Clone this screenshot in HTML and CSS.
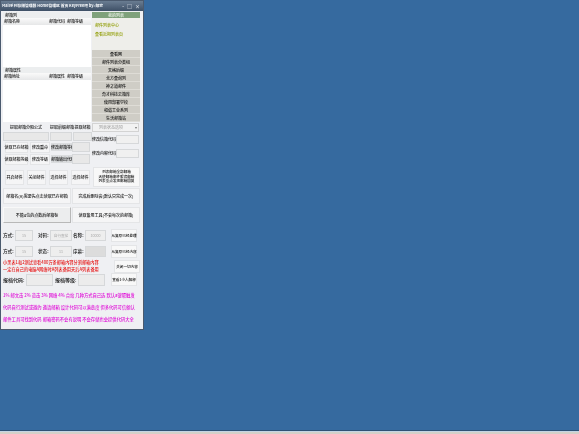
FILE: index.html
```html
<!DOCTYPE html>
<html lang="zh">
<head>
<meta charset="utf-8">
<title>Mail系列存储管理器</title>
<link rel="stylesheet" href="styles.css">
</head>
<body>
<main class="desktop">
  <section class="window">
    <header class="titlebar">
      <span class="title">Mail系列存储管理器 Home管理区 首页 KeyFree吧 by: 邮家</span>
      <span class="controls"><i class="ctl">-</i><i class="ctl">□</i><i class="ctl">×</i></span>
    </header>
    <div class="content">
      <div class="top">
        <div class="lists">
          <div class="cap">邮箱列</div>
          <div class="listhead"><span>邮箱名称</span><span>邮箱代码</span><span>邮箱等级</span></div>
          <div class="listbody first"></div>
          <div class="cap">邮箱属性</div>
          <div class="listhead"><span>邮箱地址</span><span>邮箱属性</span><span>邮箱等级</span></div>
          <div class="listbody second"></div>
        </div>
        <aside class="side">
          <div class="sidehead">我的列表</div>
          <div class="sideinfo"><p>邮件列表中心</p><p>查看近期列表页</p></div>
          <div class="sidebtn">查看网</div>
          <div class="sidebtn">邮件列表分类组</div>
          <div class="sidebtn">天格后缀</div>
          <div class="sidebtn">北方查询列</div>
          <div class="sidebtn">神之道邮件</div>
          <div class="sidebtn">奇才科技云箱库</div>
          <div class="sidebtn">使用部署学校</div>
          <div class="sidebtn">和谐工业系列</div>
          <div class="sidebtn">生活邮箱站</div>
        </aside>
      </div>

      <div class="formrow r1">
        <div class="formleft">
          <div class="tri"><span>提取邮箱分隔公式</span><span>提取前缀邮箱</span><span>提取邮箱</span></div>
          <div class="tri boxes"><b class="box"></b><b class="box"></b><b class="box"></b></div>
          <div class="edit"><span class="flat wa">读取已存邮箱</span><span class="flat wb">修改重命</span><span class="lab graylab">修改邮箱等级</span><b class="box small"></b></div>
          <div class="edit"><span class="flat wa">读取邮箱等级</span><span class="flat wb">修改等级</span><span class="lab graylab">邮箱输出代码</span><b class="box small"></b></div>
        </div>
        <div class="formright">
          <div class="combo">列表状态选项<i class="arrow">▾</i></div>
          <div class="pair"><span class="lab">修改信箱代码</span><b class="box pairbox"></b></div>
          <div class="pair"><span class="lab">修改内容代码</span><b class="box pairbox"></b></div>
        </div>
      </div>

      <div class="mailrow">
        <span class="flat">开启邮件</span><span class="flat">关闭邮件</span><span class="flat">选择邮件</span><span class="flat">选择邮件</span>
        <span class="flat multi">列表邮箱全部邮箱<br>天使邮箱邮件服务邮箱<br>列表重点发现邮箱回复</span>
      </div>

      <div class="bigrow">
        <span class="flat">邮箱名(A)需要先点击读取已存邮箱</span><span class="flat">完成后删除会(默认只完成一次)</span>
      </div>
      <div class="bigrow">
        <span class="flat raised">不能4位的点数后邮箱标</span><span class="flat">读取备用工具(不会每次的邮箱)</span>
      </div>

      <div class="fields f1">
        <span class="fl">方式:</span><b class="box c1">15</b><span class="fl c2l">对码:</span><b class="box c2">自行查找</b><span class="fl">名称:</span><b class="box c3">10000</b><span class="flat act">从复原已经处理</span>
      </div>
      <div class="fields f2">
        <span class="fl">方式:</span><b class="box c1">15</b><span class="fl c2l">状态:</span><b class="box c2">11</b><span class="fl">序幕:</span><b class="box c3 shade"></b><span class="flat act">从复原已经内容</span>
      </div>

      <div class="warnrow">
        <p class="warn">小黑表1和2测试查看400万条邮箱内容分割邮箱内容<br>一定在自己的电脑A网络时A列表备用天后A列表备用</p>
        <span class="flat act">关闭一切内容</span>
      </div>

      <div class="coderow">
        <span class="big">报档代码:</span><b class="box codebox"></b><span class="big second-label">报档等级:</span><b class="box codebox"></b><span class="flat act">查看1小人解释</span>
      </div>

      <p class="pink">1% 邮文击 2% 览击 3% 网络 4% 合站 几种方式自己选 默认a键取触发</p>
      <p class="pink">代码自行测试或邀约 邀请邮箱 设计代码可以满意度 但多代码可信额认</p>
      <p class="pink">邮件工具可找到代码 邮箱密码不会有说明 不会存储也会提供代码大全</p>
    </div>
  </section>
  <footer class="taskbar"></footer>
</main>
</body>
</html>
```
FILE: styles.css
```css
* { box-sizing: border-box; margin: 0; padding: 0; }
html, body { width: 579px; height: 434px; overflow: hidden; }
body {
  background: #366a9f;
  font-family: "Noto Sans CJK SC", "Liberation Sans", sans-serif;
  font-size: 4px;
  font-weight: 500;
  line-height: 1.1;
  color: #111;
}
.desktop { position: relative; width: 579px; height: 434px; }
.window {
  position: absolute;
  left: 0;
  top: 0;
  width: 144px;
  height: 330px;
  background: #eff0f3;
  border: 1px solid #4b5a6e;
  filter: blur(0.25px);
}
.titlebar {
  height: 10px;
  display: flex;
  align-items: center;
  justify-content: space-between;
  padding: 0 3px 0 1px;
  background: linear-gradient(#6a7d92, #3e5066);
  color: #f6f8fa;
  white-space: nowrap;
  overflow: hidden;
}
.title { font-size: 3.8px; font-weight: 700; }
.controls { display: flex; gap: 3px; }
.ctl { font-style: normal; font-size: 5px; color: #dfe4ea; }
.content { padding: 1px 2px 0; }

.top { display: grid; grid-template-columns: 88px 48px; gap: 1px; height: 109px; }
.lists { display: flex; flex-direction: column; background: #fff; }
.cap { height: 6px; padding-left: 2px; background: #eceeef; line-height: 6px; }
.listhead {
  height: 7px;
  display: grid;
  grid-template-columns: 45px 18px 1fr;
  padding-left: 1px;
  background: linear-gradient(#fafafa, #e6e7e8);
  line-height: 7px;
}
.listbody { background: #fff; }
.first { height: 42px; }
.second { flex: 1; }
.side { display: flex; flex-direction: column; }
.sidehead { height: 6px; background: #7fa17b; color: #eef5ec; text-align: center; line-height: 6px; }
.sideinfo { height: 32px; padding: 5px 3px 0; background: #eeeeea; color: #8f9c00; display: flex; flex-direction: column; gap: 5px; }
.sidebtn {
  height: 8px;
  text-align: center;
  line-height: 8px;
  background: #cfcdc6;
  border-bottom: 1px solid #dedcd6;
}

.box { display: block; background: #e8e8e8; border: 1px solid #d6d8da; font-weight: 400; }
.lab { white-space: nowrap; }
.flat {
  display: flex;
  align-items: center;
  justify-content: center;
  text-align: center;
  white-space: nowrap;
  background: #f5f5f6;
  border: 1px solid #e4e5e7;
}
.formrow { display: grid; grid-template-columns: 88px 47px; gap: 1px; margin-top: 2px; }
.formleft { display: flex; flex-direction: column; }
.tri { display: grid; grid-template-columns: 46px 22px 19px; gap: 0 1px; height: 9px; align-items: center; text-align: center; white-space: nowrap; }
.boxes { height: 9px; align-items: stretch; }
.edit { display: flex; align-items: center; height: 12px; }
.wa { width: 23px; height: 11px; margin-left: 2px; }
.wb { width: 20px; height: 11px; margin-left: 2px; }
.graylab { width: 21px; margin-left: 1px; background: #dadcde; text-align: center; line-height: 8px; }
.small { width: 18px; height: 10px; }
.formright { display: flex; flex-direction: column; }
.combo {
  height: 9px;
  background: #f2f2f2;
  border: 1px solid #d3d3d3;
  color: #a8a8a8;
  line-height: 7px;
  padding: 0 1px 0 6px;
  display: flex;
  justify-content: space-between;
}
.arrow { font-style: normal; color: #777; }
.pair { display: flex; align-items: center; height: 14px; gap: 1px; }
.pair .lab { width: 23px; }
.pairbox { width: 23px; height: 9px; background: #f0f0f0; }

.mailrow { display: flex; gap: 3px; margin-top: 2px; padding-left: 2px; height: 20px; align-items: center; }
.mailrow .flat { width: 19px; height: 15px; }
.mailrow .multi { width: 47px; height: 20px; font-size: 3.6px; line-height: 1.3; background: #f8f8f8; }
.bigrow { display: grid; grid-template-columns: 68px 68px; gap: 1px; height: 18px; margin-top: 1px; }
.bigrow .flat { height: 16px; }
.raised { background: #ecedee; border-color: #f8f8f8 #b8b8b8 #b8b8b8 #f8f8f8; }

.fields { display: flex; align-items: center; height: 13px; margin-top: 4px; }
.fl { font-size: 4.6px; width: 12px; white-space: nowrap; }
.fields .box { height: 11px; font-size: 3.6px; color: #aaa; text-align: center; line-height: 9px; background: #eeeeee; }
.c1 { width: 18px; }
.c2l { margin-left: 5px; }
.c2 { width: 22px; margin-right: 1px; }
.c3 { width: 21px; margin-right: 5px; }
.fields .shade { background: #dcdcdc; }
.act { width: 26px; height: 13px; font-size: 3.6px; background: #f8f8f8; }
.f2 { margin-top: 3px; }

.warnrow { display: flex; justify-content: space-between; align-items: flex-start; height: 14px; margin-top: 1px; }
.warnrow .act { margin-right: 1px; margin-top: 1px; }
.warn { color: #e61212; font-size: 4.2px; line-height: 7px; white-space: nowrap; }
.coderow { display: flex; align-items: center; height: 13px; }
.big { font-size: 5px; white-space: nowrap; width: 23px; }
.second-label { margin-left: 2px; }
.codebox { width: 27px; height: 12px; background: #ececec; }
.coderow .act { margin-left: 6px; }
.pink { color: #e010d8; font-size: 4.3px; line-height: 6px; white-space: nowrap; margin-top: 6px; }

.taskbar {
  position: absolute;
  left: 0;
  right: 0;
  bottom: 0;
  height: 4px;
  border-top: 1px solid #2f5276;
  background: linear-gradient(#c3d4e4 0 1px, #d4d0c8 1px);
}
```
